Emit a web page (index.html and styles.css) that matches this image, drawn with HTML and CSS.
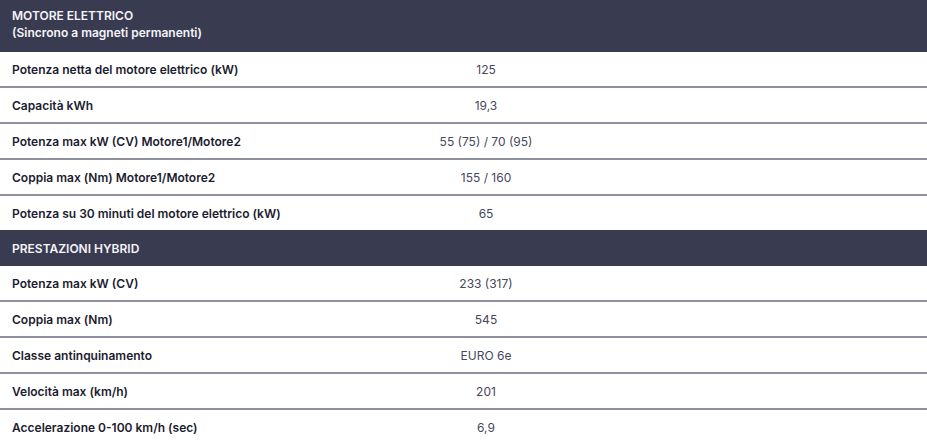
FILE: index.html
```html
<!DOCTYPE html>
<html lang="it">
<head>
<meta charset="utf-8">
<link rel="stylesheet" href="styles.css">
</head>
<body>
<div class="specs">
  <div class="section-head"><div>MOTORE ELETTRICO</div><div>(Sincrono a magneti permanenti)</div></div>
  <div class="row"><div class="label">Potenza netta del motore elettrico (kW)</div><div class="value">125</div></div>
  <div class="row"><div class="label">Capacità kWh</div><div class="value">19,3</div></div>
  <div class="row"><div class="label">Potenza max kW (CV) Motore1/Motore2</div><div class="value">55 (75) / 70 (95)</div></div>
  <div class="row"><div class="label">Coppia max (Nm) Motore1/Motore2</div><div class="value">155 / 160</div></div>
  <div class="row last"><div class="label">Potenza su 30 minuti del motore elettrico (kW)</div><div class="value">65</div></div>
  <div class="section-head single"><div>PRESTAZIONI HYBRID</div></div>
  <div class="row"><div class="label">Potenza max kW (CV)</div><div class="value">233 (317)</div></div>
  <div class="row"><div class="label">Coppia max (Nm)</div><div class="value">545</div></div>
  <div class="row"><div class="label">Classe antinquinamento</div><div class="value">EURO 6e</div></div>
  <div class="row"><div class="label">Velocità max (km/h)</div><div class="value">201</div></div>
  <div class="row last"><div class="label">Accelerazione 0-100 km/h (sec)</div><div class="value">6,9</div></div>
</div>
</body>
</html>
```
FILE: styles.css
```css
html, body {
  margin: 0;
  padding: 0;
  background: #ffffff;
}
body {
  font-family: "Inter", sans-serif;
  font-size: 12px;
}
.specs {
  display: flex;
  flex-direction: column;
  width: 927px;
}
.section-head {
  background: #393b51;
  color: #f4f4f8;
  font-weight: 600;
  line-height: 17px;
  padding: 7px 12px 11px;
  height: 34px;
}
.section-head.single {
  height: 36px;
  padding: 0 12px;
  display: flex;
  align-items: center;
}
.row {
  display: grid;
  grid-template-columns: 371px 230px 1fr;
  align-items: center;
  height: 34px;
  border-bottom: 2px solid #8f90a1;
}
.row.last {
  border-bottom: none;
}
.label {
  padding-left: 12px;
  font-weight: 600;
  color: #1b1c30;
}
.value {
  text-align: center;
  color: #45475c;
}
```
